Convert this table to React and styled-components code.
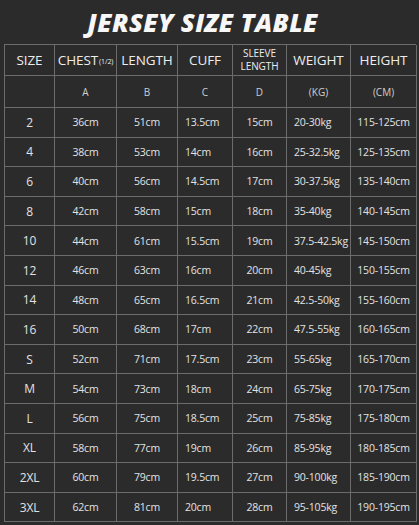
import React from 'react';
import styled, { createGlobalStyle } from 'styled-components';

const GlobalStyle = createGlobalStyle`
    html, body {
        margin: 0;
        padding: 0;
        background: #2b2b2b;
    }
`;

const columns = [
    { key: 'size', width: 50, title: 'SIZE', sub: '' },
    { key: 'chest', width: 62, title: 'CHEST', small: '(1/2)', sub: 'A' },
    { key: 'length', width: 61, title: 'LENGTH', sub: 'B' },
    { key: 'cuff', width: 55, title: 'CUFF', sub: 'C', left: true },
    { key: 'sleeve', width: 54, title: 'SLEEVE LENGTH', twoLine: true, sub: 'D' },
    { key: 'weight', width: 64, title: 'WEIGHT', sub: '(KG)', left: true },
    { key: 'height', width: 66, title: 'HEIGHT', sub: '(CM)' },
];

const rows = [
    ['2', '36cm', '51cm', '13.5cm', '15cm', '20-30kg', '115-125cm'],
    ['4', '38cm', '53cm', '14cm', '16cm', '25-32.5kg', '125-135cm'],
    ['6', '40cm', '56cm', '14.5cm', '17cm', '30-37.5kg', '135-140cm'],
    ['8', '42cm', '58cm', '15cm', '18cm', '35-40kg', '140-145cm'],
    ['10', '44cm', '61cm', '15.5cm', '19cm', '37.5-42.5kg', '145-150cm'],
    ['12', '46cm', '63cm', '16cm', '20cm', '40-45kg', '150-155cm'],
    ['14', '48cm', '65cm', '16.5cm', '21cm', '42.5-50kg', '155-160cm'],
    ['16', '50cm', '68cm', '17cm', '22cm', '47.5-55kg', '160-165cm'],
    ['S', '52cm', '71cm', '17.5cm', '23cm', '55-65kg', '165-170cm'],
    ['M', '54cm', '73cm', '18cm', '24cm', '65-75kg', '170-175cm'],
    ['L', '56cm', '75cm', '18.5cm', '25cm', '75-85kg', '175-180cm'],
    ['XL', '58cm', '77cm', '19cm', '26cm', '85-95kg', '180-185cm'],
    ['2XL', '60cm', '79cm', '19.5cm', '27cm', '90-100kg', '185-190cm'],
    ['3XL', '62cm', '81cm', '20cm', '28cm', '95-105kg', '190-195cm'],
];

const App = () => {
    return (
        <>
            <GlobalStyle />
            <Page>
                <Title>JERSEY SIZE TABLE</Title>
                <Table>
                    {/* 헤더 */}
                    {columns.map((col) => (
                        <HeadCell key={col.key}>
                            {col.twoLine ? (
                                <Stack>
                                    <span>SLEEVE</span>
                                    <span>LENGTH</span>
                                </Stack>
                            ) : (
                                <>
                                    {col.title}
                                    {col.small && <Small>{col.small}</Small>}
                                </>
                            )}
                        </HeadCell>
                    ))}
                    {columns.map((col) => (
                        <SubCell key={col.key + '-sub'}>{col.sub}</SubCell>
                    ))}
                    {rows.map((row) =>
                        row.map((value, i) => (
                            <Cell key={row[0] + i} $left={columns[i].left} $size={i === 0}>
                                {value}
                            </Cell>
                        ))
                    )}
                </Table>
            </Page>
        </>
    );
};

export default App;

const Page = styled.div`
    width: 419px;
    height: 525px;
    background: #2b2b2b;
    overflow: hidden;
    font-family: "Open Sans", "Noto Sans", sans-serif;
    color: #e6e6e6;
`;

const Title = styled.h1`
    margin: 0;
    height: 44px;
    display: flex;
    align-items: center;
    justify-content: center;
    padding-right: 14px;
    font-family: "Open Sans", "Noto Sans", sans-serif;
    font-size: 25.5px;
    font-weight: 800;
    font-style: italic;
    letter-spacing: 0.4px;
    color: #f7f7f7;
`;

const Table = styled.div`
    margin-left: 4px;
    width: 412px;
    display: grid;
    grid-template-columns: ${columns.map((c) => c.width + 'px').join(' ')};
    grid-template-rows: 31px 32px repeat(14, 29.6px);
    border-top: 1px solid #6c6c6c;
    border-left: 1px solid #6c6c6c;
    box-sizing: border-box;
`;

const BaseCell = styled.div`
    display: flex;
    align-items: center;
    justify-content: center;
    border-right: 1px solid #6c6c6c;
    border-bottom: 1px solid #6c6c6c;
    box-sizing: border-box;
    white-space: nowrap;
`;

const HeadCell = styled(BaseCell)`
    font-size: 13.5px;
    line-height: 16px;
    text-align: center;
    color: #ededed;
    letter-spacing: -0.1px;
`;

const Stack = styled.div`
    display: flex;
    flex-direction: column;
    align-items: center;
    font-size: 10px;
    line-height: 13px;
`;

const Small = styled.span`
    font-size: 7px;
    margin-left: 1px;
    margin-top: 4px;
`;

const SubCell = styled(BaseCell)`
    font-size: 10px;
    color: #cfcfcf;
`;

const Cell = styled(BaseCell)`
    justify-content: ${(props) => (props.$left ? 'flex-start' : 'center')};
    padding-left: ${(props) => (props.$left ? '7px' : '0')};
    font-size: ${(props) => (props.$size ? '12px' : '10.5px')};
    color: #e2e2e2;
    letter-spacing: -0.2px;
`;
